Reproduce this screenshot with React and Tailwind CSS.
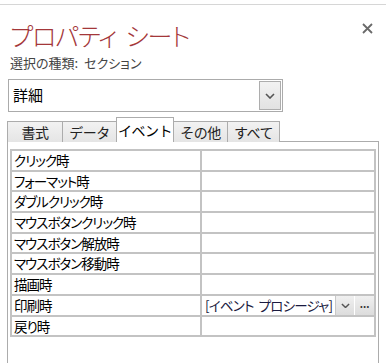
import React from 'react';

const jp = "font-['Noto_Sans_CJK_JP','Noto_Sans',sans-serif] [font-feature-settings:'palt']";

const rows = [
  'クリック時',
  'フォーマット時',
  'ダブルクリック時',
  'マウスボタンクリック時',
  'マウスボタン解放時',
  'マウスボタン移動時',
  '描画時',
  '印刷時',
  '戻り時',
];

const tabs = ['書式', 'データ', 'イベント', 'その他', 'すべて'];
const tabWidths = ['w-[56px]', 'w-[55px]', 'w-[58px]', 'w-[55px]', 'w-[53px]'];

const Chevron = ({ size = 10 }) => (
  <svg width={size} height={size * 0.6} viewBox="0 0 10 6" fill="none">
    <path d="M1 1 L5 5 L9 1" stroke="#555" strokeWidth="1.6" />
  </svg>
);

export default function App() {
  return (
    <div className={`w-[386px] h-[363px] bg-white overflow-hidden ${jp}`}>
      <div className="h-[4px]" />
      <div className="border-t border-[#d6d6d6]" />

      {/* header */}
      <div className="flex items-start justify-between pl-[10px] pr-[13px] pt-[13px] h-[48px]">
        <h1 className="text-[25px] leading-[34px] font-light text-[#a4373a] tracking-[-1px]">
          プロパティ<span className="ml-[9px]">シート</span>
        </h1>
        <svg width="11" height="11" viewBox="0 0 11 11" className="mt-[5px]">
          <path d="M1 1 L10 10 M10 1 L1 10" stroke="#6a6a6a" strokeWidth="1.8" />
        </svg>
      </div>
      <div className="pl-[10px] text-[13px] leading-[20px] text-[#444]">
        選択の種類:<span className="ml-[6px]">セクション</span>
      </div>

      {/* selector */}
      <div className="ml-[8px] mt-[6px] w-[275px] h-[33px] border border-[#ababab] flex items-center">
        <span className="pl-[4px] text-[15px] text-black flex-1">詳細</span>
        <div className="w-[22px] h-[29px] mr-[1px] border border-[#adadad] bg-gradient-to-b from-[#f2f2f2] to-[#e2e2e2] flex items-center justify-center">
          <Chevron />
        </div>
      </div>

      {/* tabs */}
      <div className="ml-[7px] mt-[5px] flex items-end h-[25px]">
        {tabs.map((t, i) => {
          const active = i === 2;
          return (
            <div
              key={t}
              className={`${tabWidths[i]} flex items-center justify-center text-[14px] [font-feature-settings:normal] tracking-[-0.5px] border border-b-0 -ml-px first:ml-0 ${
                active
                  ? 'h-[25px] bg-white border-[#acacac] relative z-10 text-black'
                  : 'h-[21px] bg-gradient-to-b from-[#f2f2f2] to-[#e5e5e5] border-[#acacac] text-[#222]'
              }`}
            >
              {t}
            </div>
          );
        })}
      </div>

      {/* panel */}
      <div className="ml-[7px] w-[372px] h-[300px] border border-[#acacac] -mt-px bg-white pt-[7px] pl-[2px]">
        <div className="w-[366px] bg-[#c3c3c3] p-[2px] flex flex-col gap-[2px]">
          {rows.map((r) => (
            <div key={r} className="grid grid-cols-[188px_1fr] gap-[2px] h-[18.7px]">
              <div className="bg-white pl-[2px] text-[13.5px] tracking-[-1px] leading-[19px] text-black whitespace-nowrap overflow-hidden">{r}</div>
              {r === '印刷時' ? (
                <div className="bg-white flex items-stretch min-w-0">
                  <span className="flex-1 min-w-0 pl-[3px] text-[13.5px] tracking-[-0.8px] leading-[19px] text-[#1a1a40] whitespace-nowrap overflow-hidden">
                    [イベント<span className="ml-[5px]">プロシージャ]</span>
                  </span>
                  <div className="w-[19px] shrink-0 bg-gradient-to-b from-[#f0f0f0] to-[#dcdcdc] border-l border-[#c8c8c8] flex items-center justify-center">
                    <Chevron size={9} />
                  </div>
                  <div className="w-[19px] shrink-0 ml-[1px] bg-gradient-to-b from-[#f0f0f0] to-[#dcdcdc] flex items-center justify-center text-[10px] font-bold leading-none text-[#333] pb-[2px]">
                    ...
                  </div>
                </div>
              ) : (
                <div className="bg-white" />
              )}
            </div>
          ))}
        </div>
      </div>
    </div>
  );
}
